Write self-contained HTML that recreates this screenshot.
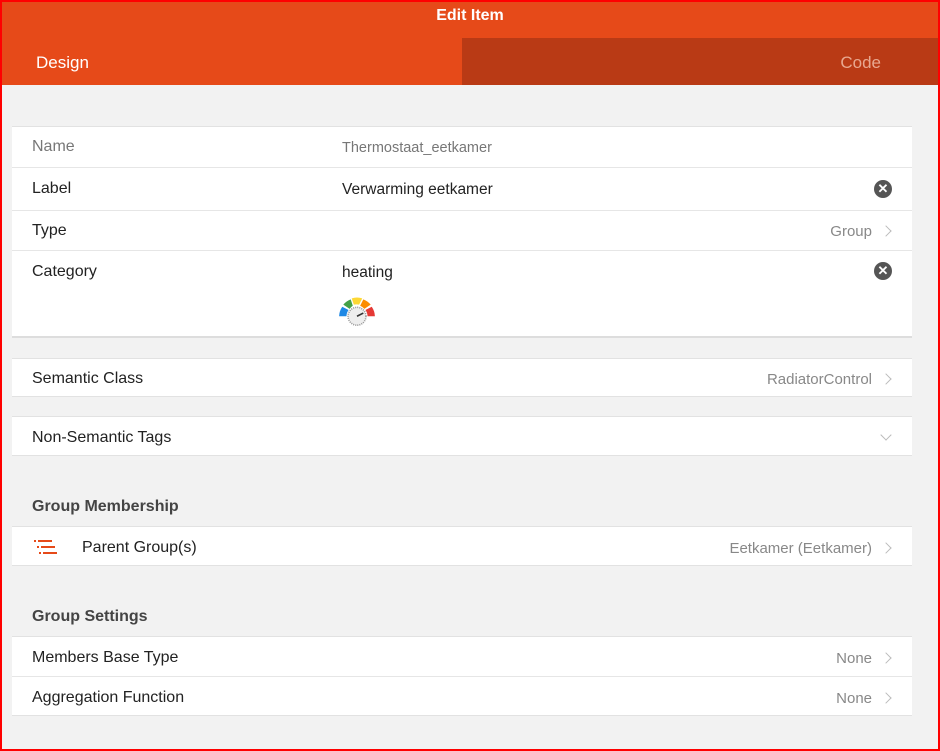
<!DOCTYPE html>
<html><head><meta charset="utf-8"><style>
*{margin:0;padding:0;box-sizing:border-box}
body{width:940px;height:751px;overflow:hidden;font-family:"Liberation Sans",sans-serif;background:#f2f2f2;position:relative}
.frame{position:absolute;left:0;top:0;width:940px;height:751px;border:2px solid #f00;z-index:10;pointer-events:none}
.hdr{position:absolute;left:0;top:0;width:940px;height:38px;background:#e64a19;color:#fff;font-weight:bold;font-size:16px;text-align:center;line-height:32px}
.tab1{position:absolute;left:0;top:38px;width:462px;height:47px;background:#e64a19;color:#fff;font-size:17px;line-height:49px;padding-left:36px}
.tab2{position:absolute;left:462px;top:38px;width:478px;height:47px;background:#b93a15;color:#e8a890;font-size:17px;line-height:49px;text-align:right;padding-right:59px}
.card{position:absolute;left:12px;width:900px;background:#fff;border-top:1px solid #e2e2e2;border-bottom:1px solid #e2e2e2}
.row{position:absolute;left:0;width:900px;font-size:16px;color:#222}
.row .l{position:absolute;left:20px;top:1px}
.row .v{position:absolute;left:330px;font-size:15.5px}
.row .r{position:absolute;right:40px;font-size:15px;color:#888}
.chev{position:absolute;right:22px;width:8px;height:8px;border-right:1.5px solid #bbb;border-top:1.5px solid #bbb;transform:rotate(45deg)}
.sep{position:absolute;left:0;width:900px;border-top:1px solid #e6e6e6}
.x{position:absolute;right:20px;width:18px;height:18px;border-radius:50%;background:#555;color:#fff;font-size:13px;font-weight:bold;text-align:center;line-height:18px}
.h{position:absolute;left:32px;font-size:16px;font-weight:bold;color:#444}
</style></head><body>
<div class="hdr">Edit Item</div>
<div class="tab1">Design</div>
<div class="tab2">Code</div>

<div class="card" style="top:126px;height:212px;border-bottom:2px solid #ddd">
  <div class="row" style="top:10px"><span class="l" style="color:#777">Name</span><span class="v" style="color:#777;font-size:14.5px;top:3px">Thermostaat_eetkamer</span></div>
  <div class="sep" style="top:40px"></div>
  <div class="row" style="top:52px"><span class="l">Label</span><span class="v" style="top:2px">Verwarming eetkamer</span><span class="x" style="top:1px">✕</span></div>
  <div class="sep" style="top:83px"></div>
  <div class="row" style="top:94px"><span class="l">Type</span><span class="r" style="top:2px">Group</span><span class="chev" style="top:6px"></span></div>
  <div class="sep" style="top:123px"></div>
  <div class="row" style="top:135px"><span class="l">Category</span><span class="v" style="top:2px">heating</span><span class="x" style="top:0px">✕</span></div>
  <svg style="position:absolute;left:325px;top:169px" width="40" height="30" viewBox="0 0 38 28">
    <path d="M2 19 A17 17 0 0 1 5 10 L11 13 A10 10 0 0 0 9 19Z" fill="#1e88e5"/>
    <path d="M6 8 A17 17 0 0 1 13 3 L15 9 A10 10 0 0 0 12 12Z" fill="#43a047"/>
    <path d="M14 2 A17 17 0 0 1 24 2 L21 8 A10 10 0 0 0 16 8Z" fill="#fdd835"/>
    <path d="M25 3 A17 17 0 0 1 32 8 L26 12 A10 10 0 0 0 22 9Z" fill="#fb8c00"/>
    <path d="M33 10 A17 17 0 0 1 36 19 L29 19 A10 10 0 0 0 27 13Z" fill="#e53935"/>
    <circle cx="19" cy="19" r="8.5" fill="#eee" stroke="#999" stroke-width="1.5" stroke-dasharray="1 1"/>
    <line x1="19" y1="19" x2="25" y2="16" stroke="#333" stroke-width="1.5"/>
  </svg>
</div>

<div class="card" style="top:358px;height:39px">
  <div class="row" style="top:10px"><span class="l">Semantic Class</span><span class="r" style="top:2px">RadiatorControl</span><span class="chev" style="top:6px"></span></div>
</div>

<div class="card" style="top:416px;height:40px">
  <div class="row" style="top:11px"><span class="l">Non-Semantic Tags</span><span class="chev" style="top:3px;transform:rotate(135deg)"></span></div>
</div>

<div class="h" style="top:498px">Group Membership</div>
<div class="card" style="top:526px;height:40px">
  <svg style="position:absolute;left:22px;top:13px" width="24" height="14" viewBox="0 0 24 14">
    <g fill="#e64a19"><rect x="0" y="0" width="2" height="2"/><rect x="4" y="0" width="14" height="2"/><rect x="3" y="6" width="2" height="2"/><rect x="7" y="6" width="14" height="2"/><rect x="5" y="12" width="2" height="2"/><rect x="9" y="12" width="14" height="2"/></g>
  </svg>
  <div class="row" style="top:11px"><span class="l" style="left:70px">Parent Group(s)</span><span class="r" style="top:2px">Eetkamer (Eetkamer)</span><span class="chev" style="top:6px"></span></div>
</div>

<div class="h" style="top:608px">Group Settings</div>
<div class="card" style="top:636px;height:80px">
  <div class="row" style="top:11px"><span class="l">Members Base Type</span><span class="r" style="top:2px">None</span><span class="chev" style="top:6px"></span></div>
  <div class="sep" style="top:39px"></div>
  <div class="row" style="top:51px"><span class="l">Aggregation Function</span><span class="r" style="top:2px">None</span><span class="chev" style="top:6px"></span></div>
</div>
<div class="frame"></div>
</body></html>
